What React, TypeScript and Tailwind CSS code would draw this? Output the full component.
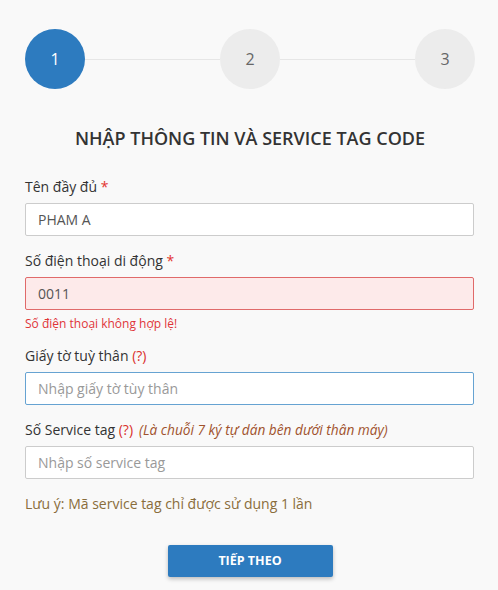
import React from "react";

function Step({ n, active }: { n: number; active?: boolean }) {
  return (
    <div
      className={
        "w-[60px] h-[60px] rounded-full flex items-center justify-center text-[16px] shrink-0 " +
        (active ? "bg-[#2d7bbf] text-white" : "bg-[#ececec] text-[#666]")
      }
    >
      {n}
    </div>
  );
}

export default function App() {
  return (
    <div
      className="min-h-[590px] w-[498px] bg-[#f9f9f9] px-[25px] pt-[29px] text-[#333]"
      style={{ fontFamily: '"Open Sans", "Noto Sans", sans-serif' }}
    >
      <div className="flex items-center w-[450px]">
        <Step n={1} active />
        <div className="flex-1 h-px bg-[#e6e6e6]" />
        <Step n={2} />
        <div className="flex-1 h-px bg-[#e6e6e6]" />
        <Step n={3} />
      </div>

      <h1 className="mt-[37px] text-center text-[18px] leading-[24px] font-semibold text-[#333] w-[450px]">
        NHẬP THÔNG TIN VÀ SERVICE TAG CODE
      </h1>

      <div className="mt-[27px] w-[449px]">
        <label className="block text-[14px] leading-[20px]">
          Tên đầy đủ <span className="text-[#e3342f]">*</span>
        </label>
        <input
          readOnly
          value="PHAM A"
          className="mt-[6px] block w-full h-[33px] bg-white border border-[#ccc] rounded-[2px] px-[12px] text-[14px] text-[#555] outline-none"
        />

        <label className="mt-[15px] block text-[14px] leading-[20px]">
          Số điện thoại di động <span className="text-[#e3342f]">*</span>
        </label>
        <input
          readOnly
          value="0011"
          className="mt-[6px] block w-full h-[33px] bg-[#fdeaea] border border-[#e06a6a] rounded-[2px] px-[12px] text-[14px] text-[#555] outline-none"
        />
        <div className="mt-[5px] text-[12px] leading-[17px] text-[#e0353a]">
          Số điện thoại không hợp lệ!
        </div>

        <label className="mt-[14px] block text-[14px] leading-[20px]">
          Giấy tờ tuỳ thân <span className="text-[#d9302c]">(?)</span>
        </label>
        <input
          readOnly
          placeholder="Nhập giấy tờ tùy thân"
          className="mt-[6px] block w-full h-[33px] bg-white border border-[#66a3d2] rounded-[2px] px-[12px] text-[14px] text-[#555] placeholder:text-[#999] outline-none"
        />

        <label className="mt-[15px] block text-[14px] leading-[20px]">
          Số Service tag <span className="text-[#d9302c]">(?)</span>
          <span className="ml-[6px] italic text-[13.7px] text-[#a0522d]">
            (Là chuỗi 7 ký tự dán bên dưới thân máy)
          </span>
        </label>
        <input
          readOnly
          placeholder="Nhập số service tag"
          className="mt-[6px] block w-full h-[33px] bg-white border border-[#ccc] rounded-[2px] px-[12px] text-[14px] text-[#555] placeholder:text-[#999] outline-none"
        />

        <div className="mt-[15px] text-[14px] leading-[20px] text-[#8a6d3b]">
          Lưu ý: Mã service tag chỉ được sử dụng 1 lần
        </div>

        <div className="mt-[31px] flex justify-center pl-[1px]">
          <button className="w-[165px] h-[32px] bg-[#2d7bbf] text-white text-[12.5px] font-bold rounded-[2px] shadow-[0_2px_4px_rgba(0,0,0,0.25)]">
            TIẾP THEO
          </button>
        </div>
      </div>
    </div>
  );
}
